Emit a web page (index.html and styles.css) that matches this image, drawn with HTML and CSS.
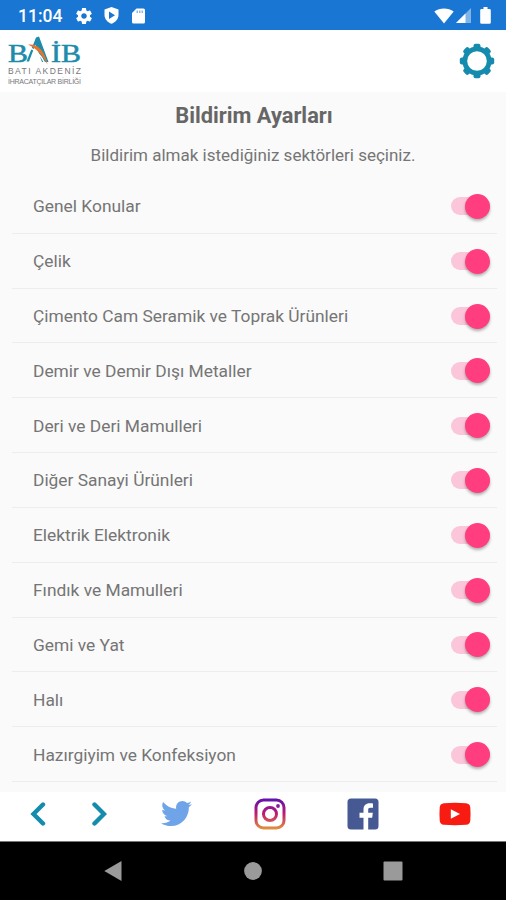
FILE: index.html
```html
<!DOCTYPE html>
<html lang="tr">
<head>
    <meta charset="UTF-8">
    <meta name="viewport" content="width=device-width, initial-scale=1.0">
    <title>Bildirim Ayarları</title>
    <link rel="stylesheet" href="styles.css">
</head>
<body>
    <div class="status-bar">
        <span class="time">11:04</span>
        <svg class="status-gear" width="16" height="16" viewBox="2 2 20 20"><path fill="#fff" d="M19.43 12.98c.04-.32.07-.64.07-.98s-.03-.66-.07-.98l2.11-1.65c.19-.15.24-.42.12-.64l-2-3.46c-.12-.22-.39-.3-.61-.22l-2.49 1c-.52-.4-1.08-.73-1.69-.98l-.38-2.65C14.46 2.18 14.25 2 14 2h-4c-.25 0-.46.18-.49.42l-.38 2.65c-.61.25-1.17.59-1.69.98l-2.49-1c-.23-.09-.49 0-.61.22l-2 3.46c-.13.22-.07.49.12.64l2.11 1.65c-.04.32-.07.65-.07.98s.03.66.07.98l-2.11 1.65c-.19.15-.24.42-.12.64l2 3.46c.12.22.39.3.61.22l2.49-1c.52.4 1.08.73 1.69.98l.38 2.65c.03.24.24.42.49.42h4c.25 0 .46-.18.49-.42l.38-2.65c.61-.25 1.17-.59 1.69-.98l2.49 1c.23.09.49 0 .61-.22l2-3.46c.12-.22.07-.49-.12-.64l-2.11-1.65zM12 15.5c-1.93 0-3.5-1.57-3.5-3.5s1.57-3.5 3.5-3.5 3.5 1.57 3.5 3.5-1.57 3.5-3.5 3.5z"/></svg>
        <svg class="status-shield" width="15" height="17" viewBox="0 0 15 17"><path fill="#fff" fill-rule="evenodd" d="M7.5 0 14.5 2.5V8c0 4-3 7.300-7 8.800C3.500 15.300.5 12 .5 8V2.500zM5 4.500v7.500l6-3.750z"/></svg>
        <svg class="status-card" width="13" height="16" viewBox="0 0 13 16"><path fill="#fff" fill-rule="evenodd" d="M4.500.5h7Q13 .5 13 2v12q0 1.500-1.500 1.500h-10Q0 15.500 0 14V5z"/><path fill="#1976d2" fill-opacity=".5" d="M4.500 2.500v2.500H6V2.500zM7 2.500v2.500h1.500V2.500zM9.500 2.500v2.500H11V2.500z"/></svg>
        <svg class="status-wifi" width="20" height="16" viewBox="0 0 20 16"><path fill="#fff" d="M10 15.500.3 3.500C5.500-.6 14.500-.6 19.700 3.500z"/></svg>
        <svg class="status-signal" width="15" height="15" viewBox="0 0 15 15"><path fill="#fff" fill-opacity=".45" d="M0 15 15 0v15z"/><path fill="#fff" d="M0 15 9.500 5.500V15z"/></svg>
        <svg class="status-battery" width="11" height="17" viewBox="0 0 11 17"><path fill="#fff" d="M3.500 0h4v2h2q1.300 0 1.300 1.300v12.200q0 1.300-1.300 1.300h-8q-1.300 0-1.300-1.300V3.300Q.2 2 1.500 2h2z"/></svg>
    </div>

    <header class="header">
        <svg class="logo" width="76" height="50" viewBox="0 0 76 50">
            <g class="logo-name">
                <text x="2" y="26" textLength="20" lengthAdjust="spacingAndGlyphs">B</text>
                <text x="45" y="26" textLength="10" lengthAdjust="spacingAndGlyphs">İ</text>
                <text x="55" y="26" textLength="20" lengthAdjust="spacingAndGlyphs">B</text>
            </g>
            <path fill="#1d8cab" d="M30 1.500 33 .5 42.500 26H36L29.500 8.500 23 25.500h-2.500z"/>
            <path fill="none" stroke="#fff" stroke-width="1.500" d="M22 11.500q10 2 17 16"/>
            <path fill="#ea732c" d="M22 8.500C32 7.500 39 15 41.500 28.500 35.500 18 31 13 22 8.500z"/>
            <text class="logo-city" x="2" y="38" textLength="73">BATI AKDENİZ</text>
            <text class="logo-union" x="2" y="47.500" textLength="73">İHRACATÇILAR BİRLİĞİ</text>
        </svg>
        <svg class="settings" width="36" height="36" viewBox="-18 -18 36 36">
            <g fill="#158bae">
                <rect x="-3.500" y="-17.200" width="7" height="34.400" rx="2"/>
                <rect x="-3.500" y="-17.200" width="7" height="34.400" rx="2" transform="rotate(45)"/>
                <rect x="-3.500" y="-17.200" width="7" height="34.400" rx="2" transform="rotate(90)"/>
                <rect x="-3.500" y="-17.200" width="7" height="34.400" rx="2" transform="rotate(135)"/>
                <circle r="14.600"/>
            </g>
            <circle r="9.800" fill="#fff"/>
        </svg>
    </header>

    <main class="content">
        <h1>Bildirim Ayarları</h1>
        <p>Bildirim almak istediğiniz sektörleri seçiniz.</p>
        <ul class="sectors">
            <li>Genel Konular<span class="switch"></span></li>
            <li>Çelik<span class="switch"></span></li>
            <li>Çimento Cam Seramik ve Toprak Ürünleri<span class="switch"></span></li>
            <li>Demir ve Demir Dışı Metaller<span class="switch"></span></li>
            <li>Deri ve Deri Mamulleri<span class="switch"></span></li>
            <li>Diğer Sanayi Ürünleri<span class="switch"></span></li>
            <li>Elektrik Elektronik<span class="switch"></span></li>
            <li>Fındık ve Mamulleri<span class="switch"></span></li>
            <li>Gemi ve Yat<span class="switch"></span></li>
            <li>Halı<span class="switch"></span></li>
            <li>Hazırgiyim ve Konfeksiyon<span class="switch"></span></li>
        </ul>
    </main>

    <footer class="toolbar">
        <svg width="16" height="26" viewBox="0 0 16 26"><path class="chevron" d="M13 3.500 3.500 13 13 22.500"/></svg>
        <svg width="16" height="26" viewBox="0 0 16 26"><path class="chevron" d="M3.500 3.500 13 13 3.500 22.500"/></svg>
        <svg width="31" height="31" viewBox="0 0 24 24"><path fill="#70a4e8" d="M23.954 4.569c-.885.389-1.830.654-2.825.775 1.014-.611 1.794-1.574 2.163-2.723-.951.555-2.005.959-3.127 1.184-.896-.959-2.173-1.559-3.591-1.559-2.717 0-4.920 2.203-4.920 4.917 0 .390.045.765.127 1.124C7.691 8.094 4.066 6.130 1.640 3.161c-.427.722-.666 1.561-.666 2.475 0 1.710.870 3.213 2.188 4.096-.807-.026-1.566-.248-2.228-.616v.061c0 2.385 1.693 4.374 3.946 4.827-.413.111-.849.171-1.296.171-.314 0-.615-.030-.916-.086.631 1.953 2.445 3.377 4.604 3.417-1.680 1.319-3.809 2.105-6.102 2.105-.390 0-.779-.023-1.170-.067 2.189 1.394 4.768 2.209 7.557 2.209 9.054 0 13.999-7.496 13.999-13.986 0-.209 0-.420-.015-.630.961-.689 1.800-1.560 2.460-2.548z"/></svg>
        <svg width="32" height="32" viewBox="0 0 32 32">
            <defs>
                <linearGradient id="insta" gradientUnits="userSpaceOnUse" x1="0" y1="0" x2="0" y2="32">
                    <stop offset="0" stop-color="#5a10b5"/>
                    <stop offset=".5" stop-color="#c01c70"/>
                    <stop offset="1" stop-color="#e39a38"/>
                </linearGradient>
            </defs>
            <g fill="none" stroke="url(#insta)" stroke-width="3">
                <rect x="2" y="2" width="28" height="28" rx="7.500"/>
                <circle cx="16" cy="16" r="6.500"/>
            </g>
            <circle cx="24" cy="8" r="1.900" fill="#8b1a9b"/>
        </svg>
        <svg width="32" height="32" viewBox="0 0 32 32"><rect x=".5" y=".5" width="31" height="31" rx="3.500" fill="#475993"/><path fill="#fff" d="M16.500 32V19.700h-4v-4.900h4v-3.300c0-4 2.500-6.200 6-6.200 1.700 0 3 .1 3.500.2v4.200h-2.500c-1.900 0-2.300.9-2.300 2.300v2.800h4.600l-.6 4.900h-4V32z"/></svg>
        <svg width="32" height="24" viewBox="0 0 32 24"><path fill="#f71b12" d="M5 1.200q11-1 22 0 4 .3 4.300 4.300.5 6.500 0 13-.3 4-4.300 4.300-11 .8-22 0-4-.3-4.300-4.300-.5-6.500 0-13Q1 1.500 5 1.200z"/><path fill="#fff" d="M11.800 7.300v9.400L21 12z"/></svg>
    </footer>

    <nav class="nav-bar">
        <svg width="18" height="22" viewBox="0 0 18 22"><path fill="#9a9a9a" d="M17.500 1v20L.3 11z"/></svg>
        <svg width="18" height="18" viewBox="0 0 18 18"><circle cx="9" cy="9" r="8.900" fill="#9a9a9a"/></svg>
        <svg width="20" height="20" viewBox="0 0 20 20"><rect x=".5" y=".5" width="19" height="19" rx="1" fill="#9a9a9a"/></svg>
    </nav>
</body>
</html>
```
FILE: styles.css
```css
* {
    box-sizing: border-box;
}

body {
    margin: 0;
    height: 900px;
    display: flex;
    flex-direction: column;
    overflow: hidden;
    font-family: Roboto, sans-serif;
    background-color: #fafafa;
    color: #757575;
}

svg {
    display: block;
    flex: none;
}

.status-bar {
    display: flex;
    align-items: center;
    height: 30px;
    padding: 1px 15px 0 18px;
    background-color: #1976d2;
    color: #fff;
}

.time {
    width: 58px;
    font-size: 17.5px;
    font-weight: 500;
    line-height: 28px;
    padding-top: 1px;
}

.status-shield {
    margin-left: 12px;
}

.status-card {
    margin-left: 13px;
}

.status-wifi {
    margin-left: auto;
}

.status-signal {
    margin-left: 2px;
}

.status-battery {
    margin-left: 9px;
}

.header {
    display: flex;
    justify-content: space-between;
    align-items: center;
    height: 62px;
    padding: 0 11px 0 6px;
    background-color: #fff;
}

.logo-name {
    font-family: "Liberation Serif", serif;
    font-size: 26px;
    fill: #1d8cab;
    stroke: #1d8cab;
    stroke-width: 0.5px;
}

.logo-city {
    font-family: "Liberation Sans", sans-serif;
    font-size: 8.5px;
    fill: #77777b;
}

.logo-union {
    font-family: "Liberation Sans", sans-serif;
    font-size: 7px;
    fill: #77777b;
}

.content {
    height: 700px;
    overflow: hidden;
}

h1 {
    margin: 10px 0 0;
    padding-left: 2px;
    text-align: center;
    font-size: 21.8px;
    font-weight: 700;
    line-height: 28px;
    color: #666;
}

.content p {
    margin: 13px 0 0;
    text-align: center;
    font-size: 17px;
    line-height: 24px;
}

.sectors {
    list-style: none;
    margin: 12px 9px 0 12px;
    padding: 0;
}

.sectors li {
    display: flex;
    justify-content: space-between;
    align-items: center;
    height: 54.82px;
    padding: 1px 8px 0 21px;
    border-bottom: 1px solid #ededed;
    font-size: 17.36px;
}

.switch {
    display: flex;
    justify-content: flex-end;
    align-items: center;
    width: 39px;
    height: 18px;
    margin-right: -1px;
    border-radius: 9px;
    background-color: #fbc6d9;
}

.switch::after {
    content: "";
    flex: none;
    width: 25px;
    height: 25px;
    border-radius: 50%;
    background-color: #ff3d7f;
    box-shadow: 0 2px 3px rgba(0, 0, 0, 0.3);
}

.toolbar {
    display: grid;
    grid-template-columns: 61.5px 61.5px 93px 93px 93px 92px;
    align-items: center;
    justify-items: center;
    height: 50px;
    padding: 0 0 6px 7px;
    background-color: #fff;
    border-bottom: 1px solid #777;
}

.chevron {
    fill: none;
    stroke: #158bae;
    stroke-width: 4.4;
    stroke-linecap: round;
    stroke-linejoin: miter;
}

.nav-bar {
    display: grid;
    grid-template-columns: repeat(3, 140px);
    justify-content: center;
    align-items: center;
    justify-items: center;
    height: 58px;
    background-color: #000;
}
```
